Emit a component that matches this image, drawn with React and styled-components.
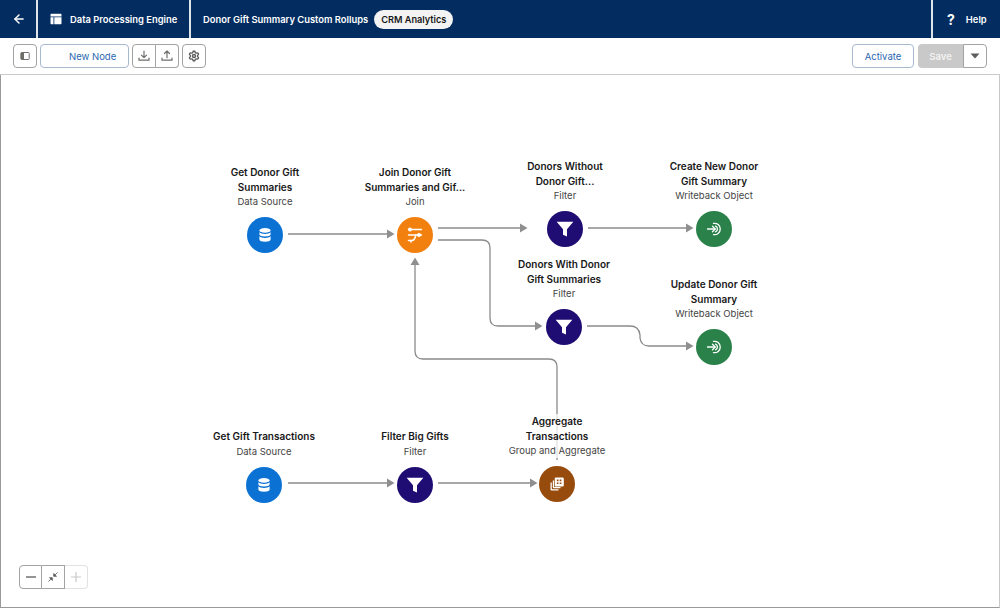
import React from 'react';
import styled, { createGlobalStyle } from 'styled-components';
import { ArrowLeft, Settings } from 'lucide-react';

const GlobalStyle = createGlobalStyle`
  html, body {
    margin: 0;
    padding: 0;
    background: #fff;
  }
  body {
    font-family: "Inter", "Liberation Sans", sans-serif;
    -webkit-font-smoothing: antialiased;
  }
`;

const Page = styled.div`
  width: 1000px;
  height: 608px;
  display: flex;
  flex-direction: column;
  overflow: hidden;
`;

const Header = styled.header`
  height: 38px;
  flex-shrink: 0;
  display: flex;
  align-items: stretch;
  background: #032d60;
  color: #fff;
  font-size: 9.4px;
  font-weight: 600;
`;

const HeaderCell = styled.div`
  display: flex;
  align-items: center;
  width: ${(p) => p.$width || 'auto'};
  flex: ${(p) => (p.$grow ? 1 : 'none')};
  padding: ${(p) => p.$padding || '0'};
  gap: ${(p) => p.$gap || '0'};
  border-right: ${(p) => (p.$divider ? '2px solid #dfe3ea' : 'none')};
  box-sizing: border-box;
`;

const Pill = styled.span`
  height: 19px;
  padding: 0 7px;
  margin-left: 6px;
  display: flex;
  align-items: center;
  border-radius: 10px;
  background: #f3f3f3;
  color: #181818;
  font-size: 9.2px;
  font-weight: 600;
`;

const HelpMark = styled.span`
  font-size: 14px;
  font-weight: 700;
`;

const Toolbar = styled.div`
  height: 37px;
  flex-shrink: 0;
  display: flex;
  align-items: center;
  justify-content: space-between;
  padding: 0 13px;
  border-bottom: 1px solid #c9c9c9;
  box-sizing: border-box;
`;

const ToolGroup = styled.div`
  display: flex;
  align-items: center;
  gap: ${(p) => p.$gap || '0'};
`;

const Joined = styled.div`
  display: flex;
`;

const IconButton = styled.button`
  width: ${(p) => p.$width || '24px'};
  height: 24px;
  padding: 0;
  display: flex;
  align-items: center;
  justify-content: center;
  background: #fff;
  color: #5c5c5c;
  border: 1px solid ${(p) => (p.$disabled ? '#e2e2e2' : '#a3a3a3')};
  border-left-width: ${(p) => (p.$joined ? 0 : '1px')};
  border-radius: ${(p) => p.$radius || '4px'};
  box-sizing: border-box;
`;

const TextButton = styled.button`
  width: ${(p) => p.$width};
  height: 24px;
  padding: ${(p) => p.$padding || '0'};
  background: #fff;
  color: #2a67b1;
  border: 1px solid #a8b8cf;
  border-radius: 4px;
  font: 400 9.5px "Inter", "Liberation Sans", sans-serif;
  text-align: ${(p) => p.$align || 'center'};
  box-sizing: border-box;
`;

const SaveButton = styled.button`
  width: 45px;
  height: 24px;
  padding: 0;
  background: #c9c9c9;
  color: #f3f3f3;
  border: none;
  border-radius: 4px 0 0 4px;
  font: 600 9.5px "Inter", "Liberation Sans", sans-serif;
`;

const Canvas = styled.main`
  position: relative;
  flex: 1;
  border: 1px solid #9a9a9a;
  border-top: none;
  border-right-color: #c9c9c9;
`;

const Edges = styled.svg`
  position: absolute;
  left: -1px;
  top: -75px;
  width: 1000px;
  height: 608px;
`;

const Node = styled.div`
  position: absolute;
  width: 124px;
  margin-left: -63px;
  display: flex;
  flex-direction: column;
  align-items: center;
  text-align: center;
`;

const Label = styled.div`
  display: flex;
  flex-direction: column;
  align-items: center;
  margin-bottom: 8px;
  background: rgba(255, 255, 255, 0.75);
`;

const Title = styled.div`
  font-size: 10px;
  line-height: 14.7px;
  font-weight: 600;
  color: #181818;
`;

const Kind = styled.div`
  font-size: 9.5px;
  line-height: 15px;
  color: #444;
`;

const Badge = styled.div`
  width: 36px;
  height: 36px;
  border-radius: 50%;
  display: flex;
  align-items: center;
  justify-content: center;
  background: ${(p) => p.$color};
`;

const ZoomBar = styled.div`
  position: absolute;
  left: 18px;
  bottom: 18px;
  display: flex;
`;

const COLORS = {
  source: '#0b72d3',
  join: '#f2800f',
  filter: '#1f0d74',
  writeback: '#2a8149',
  aggregate: '#974b0c',
};

const DatabaseIcon = () => (
  <svg width="16" height="16" viewBox="0 0 16 16" fill="#fff">
    <ellipse cx="8" cy="3.4" rx="5.6" ry="2.4" />
    <path d="M2.4 5.2v2c0 1.3 2.5 2.3 5.6 2.3s5.6-1 5.6-2.3v-2c-1 1-3.200 1.700-5.600 1.700S3.400 6.200 2.400 5.200z" />
    <path d="M2.400 9.200v3.200c0 1.300 2.500 2.300 5.600 2.300s5.600-1 5.600-2.300V9.200c-1 1-3.200 1.700-5.600 1.700s-4.600-.7-5.600-1.700z" />
  </svg>
);

const JoinIcon = () => (
  <svg width="16" height="16" viewBox="0 0 16 16" fill="none" stroke="#fff" strokeWidth="1.500" strokeLinecap="round">
    <path d="M1.500 2.500h13" />
    <path d="M1.500 8h13" />
    <path d="M1.500 13.500h3.500c2 0 3-1.500 3.800-5.500" />
    <path d="M4 13.500v1.500" />
    <circle cx="3" cy="2.500" r="1.200" fill="#fff" />
    <circle cx="12" cy="8" r="1.200" fill="#fff" />
  </svg>
);

const FunnelIcon = () => (
  <svg width="20" height="20" viewBox="0 0 18 18" fill="#fff">
    <path d="M1.500 2.500h15L10.800 9.200V15.800l-3.600-1.600V9.200z" />
  </svg>
);

const WritebackIcon = () => (
  <svg width="16" height="16" viewBox="0 0 16 16" fill="none" stroke="#fff" strokeWidth="1.300" strokeLinecap="round" strokeLinejoin="round">
    <path d="M1.500 8h7.500" />
    <path d="M6.500 5.300 9.200 8l-2.700 2.700" />
    <path d="M7.500 2.400a5.700 5.700 0 1 1 0 11.200" />
    <path d="M9.500 5.200a3 3 0 0 1 0 5.600" />
  </svg>
);

const AggregateIcon = () => (
  <svg width="16" height="16" viewBox="0 0 16 16" fill="#fff">
    <path d="M1.500 6.500v6.700c0 .7.600 1.300 1.300 1.300h6.700v-1.300H3.500c-.4 0-.7-.3-.7-.7V6.500z" />
    <path d="M3.800 4.500v6.400c0 .7.600 1.300 1.300 1.300h6.400v-1.200H5.700c-.4 0-.7-.3-.7-.7V4.500z" />
    <path fillRule="evenodd" d="M7 1.500h6.500c.8 0 1.300.6 1.300 1.300v6.500c0 .8-.6 1.300-1.300 1.300H7c-.8 0-1.300-.6-1.300-1.300V2.800c0-.7.500-1.300 1.300-1.300zM7.800 3.500v1.700h1.700V3.500zm2.900 0v1.700h1.700V3.500zM7.800 6.400v1.700h1.700V6.400zm2.900 0v1.700h1.700V6.400z" />
  </svg>
);

const NODES = [
  { x: 265, y: 90, lines: ['Get Donor Gift', 'Summaries'], kind: 'Data Source', color: COLORS.source, icon: <DatabaseIcon /> },
  { x: 415, y: 90, lines: ['Join Donor Gift', 'Summaries and Gif...'], kind: 'Join', color: COLORS.join, icon: <JoinIcon /> },
  { x: 565, y: 84, lines: ['Donors Without', 'Donor Gift...'], kind: 'Filter', color: COLORS.filter, icon: <FunnelIcon /> },
  { x: 714, y: 84, lines: ['Create New Donor', 'Gift Summary'], kind: 'Writeback Object', color: COLORS.writeback, icon: <WritebackIcon /> },
  { x: 564, y: 182, lines: ['Donors With Donor', 'Gift Summaries'], kind: 'Filter', color: COLORS.filter, icon: <FunnelIcon /> },
  { x: 714, y: 202, lines: ['Update Donor Gift', 'Summary'], kind: 'Writeback Object', color: COLORS.writeback, icon: <WritebackIcon /> },
  { x: 264, y: 354, lines: ['Get Gift Transactions'], kind: 'Data Source', color: COLORS.source, icon: <DatabaseIcon /> },
  { x: 415, y: 354, lines: ['Filter Big Gifts'], kind: 'Filter', color: COLORS.filter, icon: <FunnelIcon /> },
  { x: 557, y: 339, lines: ['Aggregate', 'Transactions'], kind: 'Group and Aggregate', color: COLORS.aggregate, icon: <AggregateIcon /> },
];

const EDGES = [
  'M288 234H388',
  'M438 228H521',
  'M438 240H482Q490 240 490 248V318Q490 326 498 326H536',
  'M588 228H687',
  'M587 326H630Q639 326 640 335V338Q641 346 649 346H687',
  'M557 460V367Q557 359 549 359H423Q415 359 415 351V264',
  'M288 483H388',
  'M438 483H531',
];

const ARROWS = [
  'M387 229.500L394.500 234L387 238.500Z',
  'M520 223.500L527.500 228L520 232.500Z',
  'M535 321.500L542.500 326L535 330.500Z',
  'M686 223.500L693.500 228L686 232.500Z',
  'M686 341.500L693.500 346L686 350.500Z',
  'M410.500 265L415 257.500L419.500 265Z',
  'M387 478.500L394.500 483L387 487.500Z',
  'M530 478.500L537.500 483L530 487.500Z',
];

export default function App() {
  return (
    <Page>
      <GlobalStyle />
      <Header>
        <HeaderCell $width="38px" $padding="0 0 0 12px" $divider>
          <ArrowLeft size={14} strokeWidth={2.500} />
        </HeaderCell>
        <HeaderCell $width="153px" $padding="0 0 0 12px" $gap="8px" $divider>
          <svg width="12" height="12" viewBox="0 0 12 12" fill="#fff">
            <path d="M1.500.8h9c.6 0 1 .4 1 1v1.700H.5V1.800c0-.6.400-1 1-1z" />
            <path d="M.5 4.300h3v7h-2c-.6 0-1-.4-1-1z" />
            <path d="M4.300 4.300h7.200v6c0 .6-.4 1-1 1H4.300z" />
          </svg>
          Data Processing Engine
        </HeaderCell>
        <HeaderCell $grow $padding="0 0 0 12px" $divider>
          Donor Gift Summary Custom Rollups
          <Pill>CRM Analytics</Pill>
        </HeaderCell>
        <HeaderCell $width="67px" $padding="0 0 0 14px" $gap="11px">
          <HelpMark>?</HelpMark>
          Help
        </HeaderCell>
      </Header>
      <Toolbar>
        <ToolGroup $gap="3px">
          <IconButton>
            <svg width="10" height="10" viewBox="0 0 10 10" fill="none" stroke="#706e6b" strokeWidth="1">
              <rect x=".8" y="1.500" width="8.400" height="7" rx=".8" />
              <rect x="1" y="1.700" width="3" height="6.600" fill="#706e6b" stroke="none" />
            </svg>
          </IconButton>
          <TextButton $width="89px" $padding="0 0 0 28px" $align="left">New Node</TextButton>
          <Joined>
            <IconButton $width="24px" $radius="4px 0 0 4px">
              <svg width="12" height="12" viewBox="0 0 12 12" fill="none" stroke="#706e6b" strokeWidth="1.200" strokeLinecap="round" strokeLinejoin="round">
                <path d="M6 1v6.500M3.500 5.200 6 7.700l2.500-2.500M1 8v2.200h10V8" />
              </svg>
            </IconButton>
            <IconButton $width="23px" $radius="0 4px 4px 0" $joined>
              <svg width="12" height="12" viewBox="0 0 12 12" fill="none" stroke="#706e6b" strokeWidth="1.200" strokeLinecap="round" strokeLinejoin="round">
                <path d="M6 7.700V1.200M3.500 3.500 6 1l2.500 2.500M1 8v2.200h10V8" />
              </svg>
            </IconButton>
          </Joined>
          <IconButton>
            <Settings size={12} strokeWidth={2.800} />
          </IconButton>
        </ToolGroup>
        <ToolGroup $gap="4px">
          <TextButton $width="62px">Activate</TextButton>
          <Joined>
            <SaveButton>Save</SaveButton>
            <IconButton $width="24px" $radius="0 4px 4px 0">
              <svg width="10" height="6" viewBox="0 0 10 6" fill="#5c5c5c">
                <path d="M.5.500h9L5 5.500z" />
              </svg>
            </IconButton>
          </Joined>
        </ToolGroup>
      </Toolbar>
      <Canvas>
        <Edges viewBox="0 0 1000 608">
          {EDGES.map((d) => (
            <path key={d} d={d} fill="none" stroke="#8b8b8b" strokeWidth="1.300" />
          ))}
          {ARROWS.map((d) => (
            <path key={d} d={d} fill="#8f8f8f" />
          ))}
        </Edges>
        {NODES.map((n) => (
          <Node key={n.lines[0]} style={{ left: n.x, top: n.y }}>
            <Label>
              {n.lines.map((line) => (
                <Title key={line}>{line}</Title>
              ))}
              <Kind>{n.kind}</Kind>
            </Label>
            <Badge $color={n.color}>{n.icon}</Badge>
          </Node>
        ))}
        <ZoomBar>
          <IconButton $width="23px" $radius="4px 0 0 4px">
            <svg width="10" height="10" viewBox="0 0 10 10" stroke="#5c5c5c" strokeWidth="1.300">
              <path d="M0 5h10" />
            </svg>
          </IconButton>
          <IconButton $width="23px" $radius="0" $joined>
            <svg width="10" height="10" viewBox="0 0 10 10" fill="#5c5c5c" stroke="#5c5c5c" strokeWidth=".8">
              <path d="M9.500.5 6.500 3.500M.5 9.500l3-3" />
              <path d="M5.700 1.500v2.800h2.800zM4.300 8.500V5.700H1.500z" />
            </svg>
          </IconButton>
          <IconButton $width="23px" $radius="0 4px 4px 0" $joined $disabled>
            <svg width="12" height="12" viewBox="0 0 12 12" stroke="#c9c9c9" strokeWidth="1.200">
              <path d="M6 1v10M1 6h10" />
            </svg>
          </IconButton>
        </ZoomBar>
      </Canvas>
    </Page>
  );
}
